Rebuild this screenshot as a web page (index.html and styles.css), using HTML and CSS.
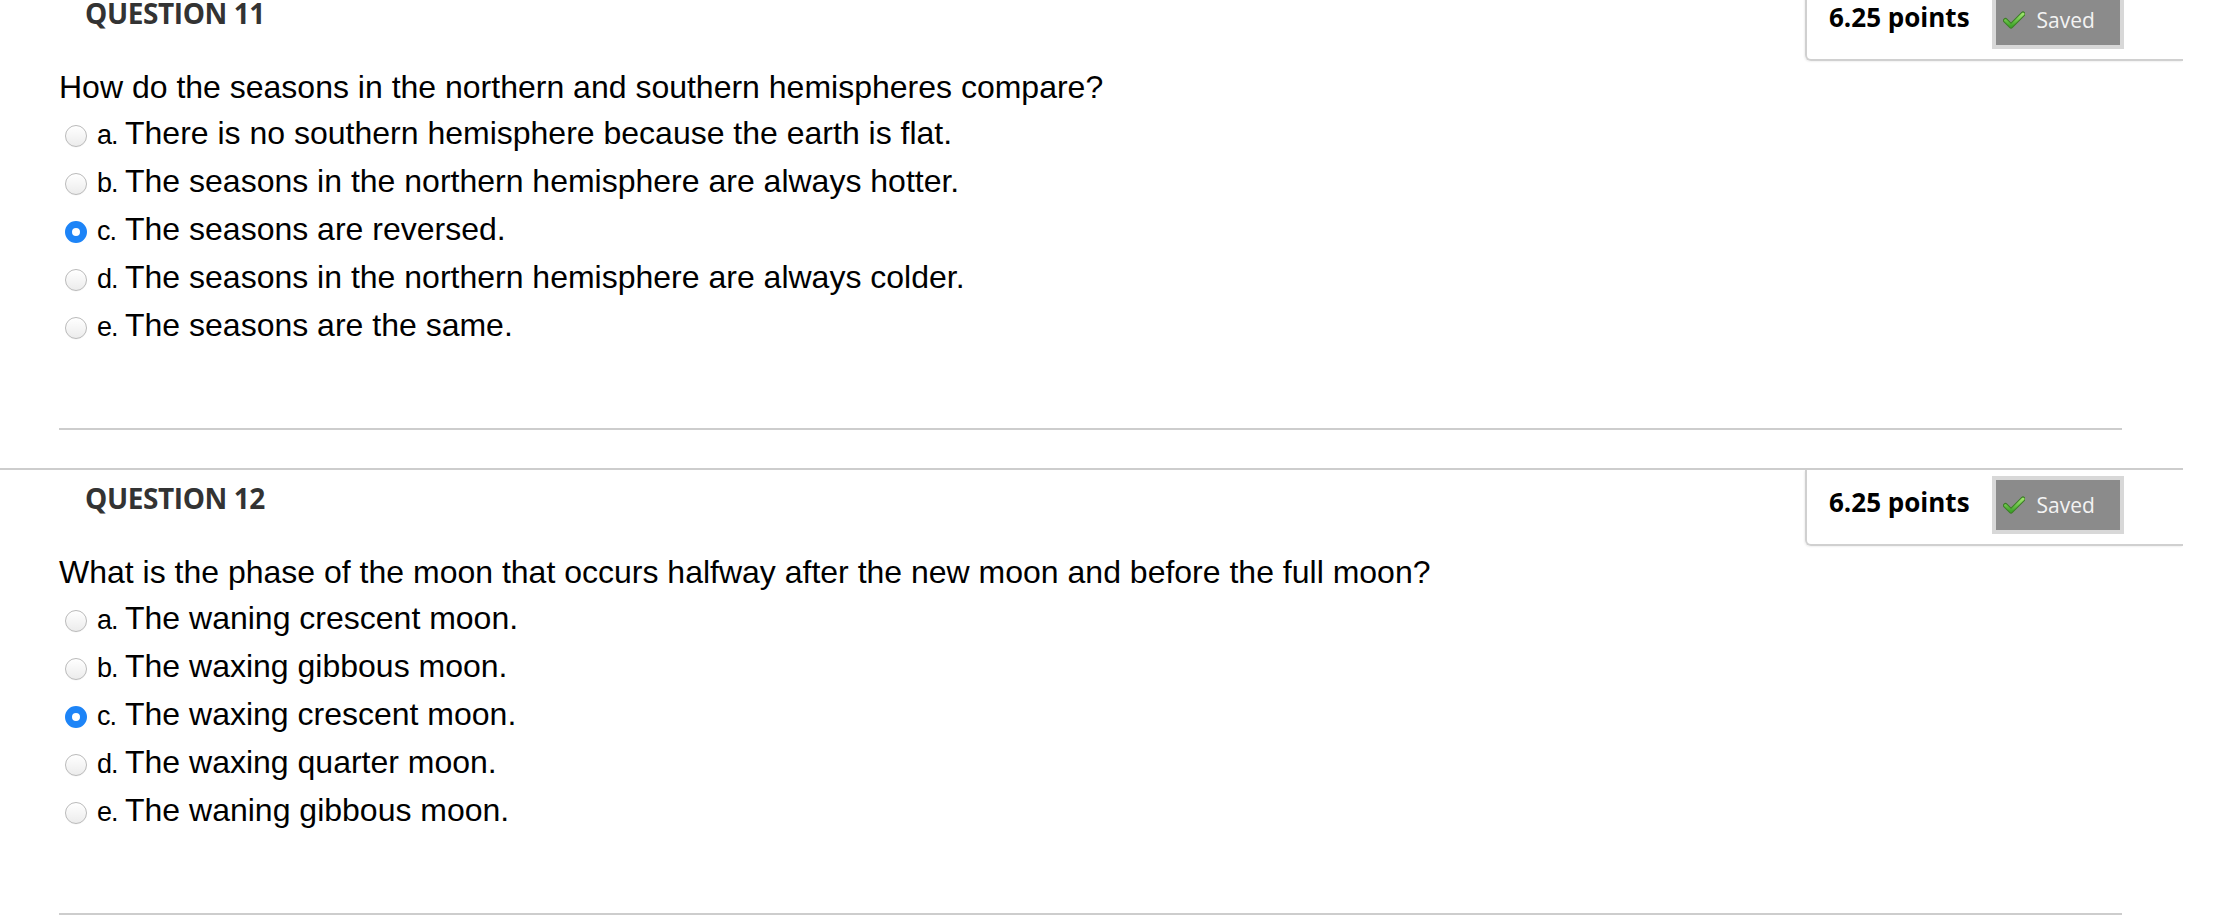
FILE: index.html
```html
<!DOCTYPE html>
<html lang="en">
<head>
<meta charset="utf-8">
<title>Quiz</title>
<link rel="stylesheet" href="styles.css">
</head>
<body>
<div class="page">
  <section class="question">
    <div class="q-head">
      <h3 class="q-title">QUESTION 11</h3>
      <div class="points-box">
        <span class="points">6.25 points</span>
        <span class="saved">
          <svg class="check" viewBox="0 0 22 18" width="22" height="18" aria-hidden="true">
            <defs>
              <linearGradient id="g1" x1="0" y1="0" x2="0" y2="1">
                <stop offset="0" stop-color="#9be36b"/>
                <stop offset="1" stop-color="#3fa52a"/>
              </linearGradient>
            </defs>
            <path d="M2.5 9.5 L8 15 L20 3" fill="none" stroke="#3b7d25" stroke-width="5" stroke-linecap="round" stroke-linejoin="round"/>
            <path d="M2.5 9.5 L8 15 L20 3" fill="none" stroke="url(#g1)" stroke-width="3" stroke-linecap="round" stroke-linejoin="round"/>
          </svg>
          <span class="saved-text">Saved</span>
        </span>
      </div>
    </div>
    <p class="q-text">How do the seasons in the northern and southern hemispheres compare?</p>
    <ul class="options">
      <li class="opt"><span class="radio"></span><span class="opt-body"><span class="opt-label">a.</span>There is no southern hemisphere because the earth is flat.</span></li>
      <li class="opt"><span class="radio"></span><span class="opt-body"><span class="opt-label">b.</span>The seasons in the northern hemisphere are always hotter.</span></li>
      <li class="opt"><span class="radio checked"></span><span class="opt-body"><span class="opt-label">c.</span>The seasons are reversed.</span></li>
      <li class="opt"><span class="radio"></span><span class="opt-body"><span class="opt-label">d.</span>The seasons in the northern hemisphere are always colder.</span></li>
      <li class="opt"><span class="radio"></span><span class="opt-body"><span class="opt-label">e.</span>The seasons are the same.</span></li>
    </ul>
    <hr class="sep">
  </section>

  <section class="question">
    <div class="q-head">
      <h3 class="q-title">QUESTION 12</h3>
      <div class="points-box">
        <span class="points">6.25 points</span>
        <span class="saved">
          <svg class="check" viewBox="0 0 22 18" width="22" height="18" aria-hidden="true">
            <defs>
              <linearGradient id="g2" x1="0" y1="0" x2="0" y2="1">
                <stop offset="0" stop-color="#9be36b"/>
                <stop offset="1" stop-color="#3fa52a"/>
              </linearGradient>
            </defs>
            <path d="M2.5 9.5 L8 15 L20 3" fill="none" stroke="#3b7d25" stroke-width="5" stroke-linecap="round" stroke-linejoin="round"/>
            <path d="M2.5 9.5 L8 15 L20 3" fill="none" stroke="url(#g2)" stroke-width="3" stroke-linecap="round" stroke-linejoin="round"/>
          </svg>
          <span class="saved-text">Saved</span>
        </span>
      </div>
    </div>
    <p class="q-text">What is the phase of the moon that occurs halfway after the new moon and before the full moon?</p>
    <ul class="options">
      <li class="opt"><span class="radio"></span><span class="opt-body"><span class="opt-label">a.</span>The waning crescent moon.</span></li>
      <li class="opt"><span class="radio"></span><span class="opt-body"><span class="opt-label">b.</span>The waxing gibbous moon.</span></li>
      <li class="opt"><span class="radio checked"></span><span class="opt-body"><span class="opt-label">c.</span>The waxing crescent moon.</span></li>
      <li class="opt"><span class="radio"></span><span class="opt-body"><span class="opt-label">d.</span>The waxing quarter moon.</span></li>
      <li class="opt"><span class="radio"></span><span class="opt-body"><span class="opt-label">e.</span>The waning gibbous moon.</span></li>
    </ul>
    <hr class="sep">
  </section>
</div>
</body>
</html>
```
FILE: styles.css
```css
html, body {
  margin: 0;
  padding: 0;
  background: #ffffff;
}

body {
  font-family: "Liberation Sans", Arial, sans-serif;
  color: #000;
  overflow: hidden;
}

.page {
  width: 2183px;
  margin-top: -17px;
}

.question {
  border-top: 2px solid #cdcdcd;
}

.q-head {
  display: flex;
  justify-content: space-between;
  align-items: flex-start;
}

.q-title {
  margin: 0;
  padding: 14px 0 0 85px;
  font-family: "Open Sans", sans-serif;
  font-weight: 700;
  font-size: 28px;
  line-height: 28px;
  color: #333333;
  letter-spacing: -0.4px;
}

.points-box {
  box-sizing: border-box;
  width: 378px;
  height: 76px;
  padding: 6px 59px 0 22px;
  display: flex;
  align-items: flex-start;
  gap: 22px;
  border-left: 2px solid #d0d0d0;
  border-bottom: 2px solid #d0d0d0;
  border-bottom-left-radius: 6px;
  box-shadow: -1px 1px 2px rgba(0, 0, 0, 0.06);
}

.points {
  font-family: "Open Sans", sans-serif;
  font-weight: 700;
  font-size: 26px;
  line-height: 52px;
  color: #000;
  white-space: nowrap;
}

.saved {
  box-sizing: border-box;
  width: 134px;
  height: 58px;
  border: 4px solid #d8d8d8;
  background: #8b8b8b;
  display: flex;
  align-items: center;
  padding-left: 7px;
  gap: 12px;
}

.check {
  display: block;
  flex: none;
}

.saved-text {
  font-family: "Open Sans", sans-serif;
  font-size: 21px;
  line-height: 21px;
  color: #f3f3f3;
}

.q-text {
  margin: 8px 0 0 0;
  padding-left: 59px;
  font-size: 32px;
  line-height: 36px;
  color: #000;
}

.options {
  list-style: none;
  margin: 5px 0 0 0;
  padding: 0 0 0 59px;
}

.opt {
  display: flex;
  align-items: center;
  height: 48px;
}

.radio {
  box-sizing: border-box;
  flex: none;
  width: 22px;
  height: 22px;
  margin: 3px 10px 0 6px;
  border-radius: 50%;
  border: 1px solid #bababa;
  background: linear-gradient(#ffffff, #ececec);
  box-shadow: inset 0 1px 1px rgba(255, 255, 255, 0.8), 0 0.5px 0.5px rgba(0, 0, 0, 0.05);
}

.radio.checked {
  border: 7px solid #1d84f7;
  background: #ffffff;
  box-shadow: none;
}

.opt-body {
  font-size: 32px;
  line-height: 48px;
  white-space: nowrap;
}

.opt-label {
  display: inline-block;
  width: 28px;
  font-size: 27px;
  letter-spacing: -1px;
}

.sep {
  margin: 78px 61px 38px 59px;
  border: 0;
  height: 2px;
  background: #cdcdcd;
}
```
